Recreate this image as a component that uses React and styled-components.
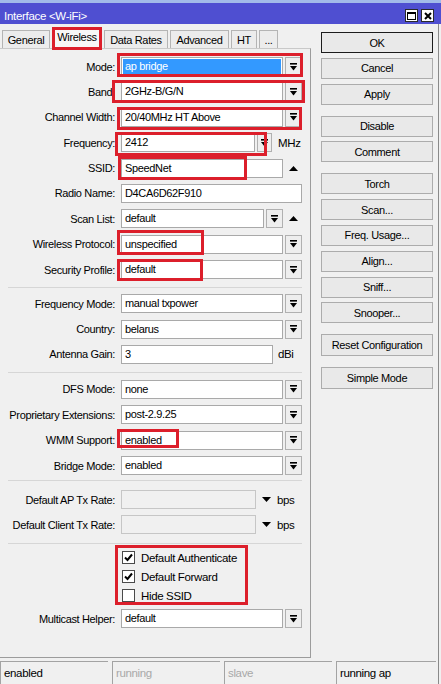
import React from 'react';
import styled, { createGlobalStyle } from 'styled-components';

const GlobalStyle = createGlobalStyle`
  html, body {
    margin: 0;
    padding: 0;
    background: #f0f0f0;
  }
  body {
    font-family: "Liberation Sans", Arial, sans-serif;
    font-size: 11px;
    letter-spacing: -0.35px;
    color: #000;
  }
`;

const Window = styled.div`
  width: 441px;
  height: 684px;
  overflow: hidden;
  display: flex;
  flex-direction: column;
  background: #f0f0f0;
`;

const TitleBar = styled.div`
  height: 17px;
  padding: 4px 7px 0 4px;
  border-top: 3px solid #a2bbe9;
  background: #4f4fd1;
  color: #fff;
  display: flex;
  align-items: center;
  font-size: 11.5px;
  letter-spacing: -0.3px;
`;

const TitleButtons = styled.div`
  margin-left: auto;
  display: flex;
  gap: 3px;
`;

const TitleBtn = styled.div`
  width: 13px;
  height: 13px;
  box-sizing: border-box;
  border: 1px solid #2b2b2b;
  background: #fff;
  display: flex;
  align-items: center;
  justify-content: center;
`;

const Body = styled.div`
  flex: 1;
  width: 438px;
  border-right: 1px solid #8a8a8a;
  display: flex;
  flex-direction: column;
`;

const Main = styled.div`
  flex: 1;
  display: flex;
`;

const LeftPane = styled.div`
  width: 311px;
  display: flex;
  flex-direction: column;
`;

const TabStrip = styled.div`
  height: 24px;
  padding-left: 2px;
  display: flex;
  align-items: flex-end;
  gap: 2px;
`;

const Tab = styled.div`
  position: relative;
  width: ${p => p.$w}px;
  height: ${p => (p.$active ? 21 : 18)}px;
  box-sizing: border-box;
  border: 1px solid #b4b4b4;
  border-bottom: none;
  background: ${p => (p.$active ? '#f7f7f7' : '#ececec')};
  display: flex;
  align-items: center;
  justify-content: center;
  padding-bottom: ${p => (p.$active ? 2 : 0)}px;
`;

const Panel = styled.div`
  flex: 1;
  border-top: 1px solid #c9c9c9;
  border-right: 1px solid #9c9c9c;
  border-bottom: 1px solid #9c9c9c;
  padding-top: 8px;
  display: flex;
  flex-direction: column;
`;

const Section = styled.div`
  display: flex;
  flex-direction: column;
  gap: 6.4px;
`;

const Row = styled.div`
  display: grid;
  grid-template-columns: 116px 181px;
  column-gap: 5px;
  min-height: 19px;
  align-items: center;
`;

const Label = styled.div`
  text-align: right;
  white-space: nowrap;
  padding-right: 1px;
`;

const Field = styled.div`
  position: relative;
  display: flex;
  gap: 2px;
  height: 19px;
  align-items: center;
`;

const Input = styled.div`
  flex: 1;
  height: 19px;
  box-sizing: border-box;
  border: 1px solid ${p => (p.$disabled ? '#c6c6c6' : '#a9a9a9')};
  background: ${p => (p.$selected ? '#3399ff' : p.$disabled ? '#f0f0f0' : '#fff')};
  color: ${p => (p.$selected ? '#fff' : '#000')};
  box-shadow: ${p => (p.$selected ? 'inset 0 0 0 1px #fff' : 'none')};
  padding: 0 3px;
  line-height: 17px;
  white-space: nowrap;
  overflow: hidden;
`;

const DropBtn = styled.div`
  width: ${p => p.$w || 17}px;
  height: 19px;
  box-sizing: border-box;
  border: 1px solid #b0b0b0;
  background: #eeeeee;
  display: flex;
  align-items: center;
  justify-content: center;
  flex-shrink: 0;
`;

const Trailing = styled.div`
  width: ${p => p.$w}px;
  height: 19px;
  box-sizing: border-box;
  padding-left: ${p => p.$pad || 0}px;
  display: flex;
  align-items: center;
  justify-content: ${p => (p.$pad !== undefined ? 'flex-start' : 'center')};
  flex-shrink: 0;
  font-size: 11.5px;
`;

const Mark = styled.span`
  position: absolute;
  left: ${p => p.$x}px;
  top: ${p => p.$y}px;
  width: ${p => p.$w}px;
  height: ${p => p.$h}px;
  box-sizing: border-box;
  border: 3px solid #dc1f2b;
  pointer-events: none;
`;

const Sep = styled.div`
  height: 1px;
  width: 294px;
  margin: ${p => p.$mt}px 0 ${p => p.$mb}px 8px;
  background: #d6d6d6;
`;

const CheckList = styled.div`
  position: relative;
  display: flex;
  flex-direction: column;
`;

const CheckRow = styled.div`
  height: 19px;
  display: flex;
  align-items: center;
  gap: 6px;
  padding-left: 1px;
  font-size: 11.5px;
`;

const Box = styled.div`
  width: 13px;
  height: 13px;
  box-sizing: border-box;
  border: 1px solid #4a4a4a;
  background: #fff;
  display: flex;
  align-items: center;
  justify-content: center;
`;

const RightCol = styled.div`
  margin-left: 10px;
  padding-top: 8px;
  width: 112px;
  display: flex;
  flex-direction: column;
  gap: 11px;
`;

const ButtonGroup = styled.div`
  display: flex;
  flex-direction: column;
  gap: 4.8px;
`;

const Button = styled.div`
  height: ${p => p.$h || 21}px;
  box-sizing: border-box;
  border: 1px solid ${p => (p.$default ? '#1c1c1c' : '#acacac')};
  background: #e9e9e9;
  display: flex;
  align-items: center;
  justify-content: center;
  white-space: nowrap;
`;

const StatusBar = styled.div`
  height: 23px;
  margin-top: 3px;
  display: flex;
  gap: 4px;
`;

const StatusCell = styled.div`
  width: ${p => p.$w}px;
  box-sizing: border-box;
  border-top: 1px solid #a3a3a3;
  border-left: 1px solid #a3a3a3;
  padding: 3px 0 0 3px;
  line-height: 16px;
  color: ${p => (p.$muted ? '#a8a8a8' : '#000')};
  font-size: 11.5px;
`;

const DropGlyph = () => (
  <svg width="7" height="8" viewBox="0 0 7 8">
    <rect x="0" y="0" width="7" height="1.6" fill="#000" />
    <polygon points="0,3 7,3 3.5,7.5" fill="#000" />
  </svg>
);

const UpArrow = () => (
  <svg width="9" height="5" viewBox="0 0 9 5">
    <polygon points="0,5 9,5 4.5,0" fill="#000" />
  </svg>
);

const DownArrow = () => (
  <svg width="9" height="5" viewBox="0 0 9 5">
    <polygon points="0,0 9,0 4.5,5" fill="#000" />
  </svg>
);

const Check = () => (
  <svg width="9" height="9" viewBox="0 0 9 9">
    <path d="M1 4.5 L3.5 7 L8 1.5" stroke="#000" strokeWidth="2" fill="none" />
  </svg>
);

const SelectField = ({ value, selected, children }) => (
  <Field>
    <Input $selected={selected}>{value}</Input>
    <DropBtn><DropGlyph /></DropBtn>
    {children}
  </Field>
);

export default function App() {
  return (
    <Window>
      <GlobalStyle />
      <TitleBar>
        <span>Interface &lt;W-iFi&gt;</span>
        <TitleButtons>
          <TitleBtn>
            <svg width="9" height="8" viewBox="0 0 9 8">
              <rect x="0.5" y="0.5" width="8" height="7" fill="none" stroke="#000" />
              <rect x="0" y="0" width="9" height="2" fill="#000" />
            </svg>
          </TitleBtn>
          <TitleBtn>
            <svg width="8" height="8" viewBox="0 0 8 8">
              <path d="M1 1 L7 7 M7 1 L1 7" stroke="#000" strokeWidth="2" />
            </svg>
          </TitleBtn>
        </TitleButtons>
      </TitleBar>

      <Body>
        <Main>
          <LeftPane>
            <TabStrip>
              <Tab $w={48}>General</Tab>
              <Tab $w={50} $active>
                Wireless
                <Mark $x={-1} $y={-1} $w={50} $h={23} />
              </Tab>
              <Tab $w={64}>Data Rates</Tab>
              <Tab $w={59}>Advanced</Tab>
              <Tab $w={26}>HT</Tab>
              <Tab $w={19}>...</Tab>
            </TabStrip>

            <Panel>
              <Section>
                <Row>
                  <Label>Mode:</Label>
                  <SelectField value="ap bridge" selected>
                    <Mark $x={-4} $y={-4} $w={186} $h={24} />
                  </SelectField>
                </Row>
                <Row>
                  <Label>Band:</Label>
                  <SelectField value="2GHz-B/G/N">
                    <Mark $x={-9} $y={-2} $w={193} $h={23} />
                  </SelectField>
                </Row>
                <Row>
                  <Label>Channel Width:</Label>
                  <SelectField value="20/40MHz HT Above">
                    <Mark $x={-4} $y={-1} $w={185} $h={23} />
                  </SelectField>
                </Row>
                <Row>
                  <Label>Frequency:</Label>
                  <Field>
                    <Input>2412</Input>
                    <DropBtn $w={15}><DropGlyph /></DropBtn>
                    <Trailing $w={28} $pad={4}>MHz</Trailing>
                    <Mark $x={-6} $y={-1.5} $w={152} $h={24} />
                  </Field>
                </Row>
                <Row>
                  <Label>SSID:</Label>
                  <Field>
                    <Input>SpeedNet</Input>
                    <Trailing $w={17}><UpArrow /></Trailing>
                    <Mark $x={-3} $y={-3} $w={129} $h={24} />
                  </Field>
                </Row>
                <Row>
                  <Label>Radio Name:</Label>
                  <Field>
                    <Input>D4CA6D62F910</Input>
                  </Field>
                </Row>
                <Row>
                  <Label>Scan List:</Label>
                  <Field>
                    <Input>default</Input>
                    <DropBtn><DropGlyph /></DropBtn>
                    <Trailing $w={17}><UpArrow /></Trailing>
                  </Field>
                </Row>
                <Row>
                  <Label>Wireless Protocol:</Label>
                  <SelectField value="unspecified">
                    <Mark $x={-4} $y={-5} $w={87} $h={25} />
                  </SelectField>
                </Row>
                <Row>
                  <Label>Security Profile:</Label>
                  <SelectField value="default">
                    <Mark $x={-4} $y={-1} $w={86} $h={22} />
                  </SelectField>
                </Row>
              </Section>

              <Sep $mt={8} $mb={6} />

              <Section>
                <Row>
                  <Label>Frequency Mode:</Label>
                  <SelectField value="manual txpower" />
                </Row>
                <Row>
                  <Label>Country:</Label>
                  <SelectField value="belarus" />
                </Row>
                <Row>
                  <Label>Antenna Gain:</Label>
                  <Field>
                    <Input>3</Input>
                    <Trailing $w={27} $pad={3}>dBi</Trailing>
                  </Field>
                </Row>
              </Section>

              <Sep $mt={8} $mb={7} />

              <Section>
                <Row>
                  <Label>DFS Mode:</Label>
                  <SelectField value="none" />
                </Row>
                <Row>
                  <Label>Proprietary Extensions:</Label>
                  <SelectField value="post-2.9.25" />
                </Row>
                <Row>
                  <Label>WMM Support:</Label>
                  <SelectField value="enabled">
                    <Mark $x={-4} $y={-1.5} $w={62} $h={19} />
                  </SelectField>
                </Row>
                <Row>
                  <Label>Bridge Mode:</Label>
                  <SelectField value="enabled" />
                </Row>
              </Section>

              <Sep $mt={5} $mb={9} />

              <Section>
                <Row>
                  <Label>Default AP Tx Rate:</Label>
                  <Field>
                    <Input $disabled />
                    <Trailing $w={16}><DownArrow /></Trailing>
                    <Trailing $w={26} $pad={1}>bps</Trailing>
                  </Field>
                </Row>
                <Row>
                  <Label>Default Client Tx Rate:</Label>
                  <Field>
                    <Input $disabled />
                    <Trailing $w={16}><DownArrow /></Trailing>
                    <Trailing $w={26} $pad={1}>bps</Trailing>
                  </Field>
                </Row>
              </Section>

              <Sep $mt={9} $mb={4} />

              <Row>
                <span />
                <CheckList>
                  <CheckRow><Box><Check /></Box>Default Authenticate</CheckRow>
                  <CheckRow><Box><Check /></Box>Default Forward</CheckRow>
                  <CheckRow><Box />Hide SSID</CheckRow>
                  <Mark $x={-6} $y={-3.4} $w={133} $h={60} />
                </CheckList>
              </Row>

              <Section style={{ marginTop: 4 }}>
                <Row>
                  <Label>Multicast Helper:</Label>
                  <SelectField value="default" />
                </Row>
              </Section>
            </Panel>
          </LeftPane>

          <RightCol>
            <ButtonGroup>
              <Button $default>OK</Button>
              <Button>Cancel</Button>
              <Button>Apply</Button>
            </ButtonGroup>
            <ButtonGroup>
              <Button>Disable</Button>
              <Button>Comment</Button>
            </ButtonGroup>
            <ButtonGroup>
              <Button>Torch</Button>
              <Button>Scan...</Button>
              <Button>Freq. Usage...</Button>
              <Button>Align...</Button>
              <Button>Sniff...</Button>
              <Button>Snooper...</Button>
            </ButtonGroup>
            <ButtonGroup>
              <Button $h={22}>Reset Configuration</Button>
            </ButtonGroup>
            <ButtonGroup>
              <Button $h={22}>Simple Mode</Button>
            </ButtonGroup>
          </RightCol>
        </Main>

        <StatusBar>
          <StatusCell $w={108}>enabled</StatusCell>
          <StatusCell $w={108} $muted>running</StatusCell>
          <StatusCell $w={108} $muted>slave</StatusCell>
          <StatusCell $w={100}>running ap</StatusCell>
        </StatusBar>
      </Body>
    </Window>
  );
}
